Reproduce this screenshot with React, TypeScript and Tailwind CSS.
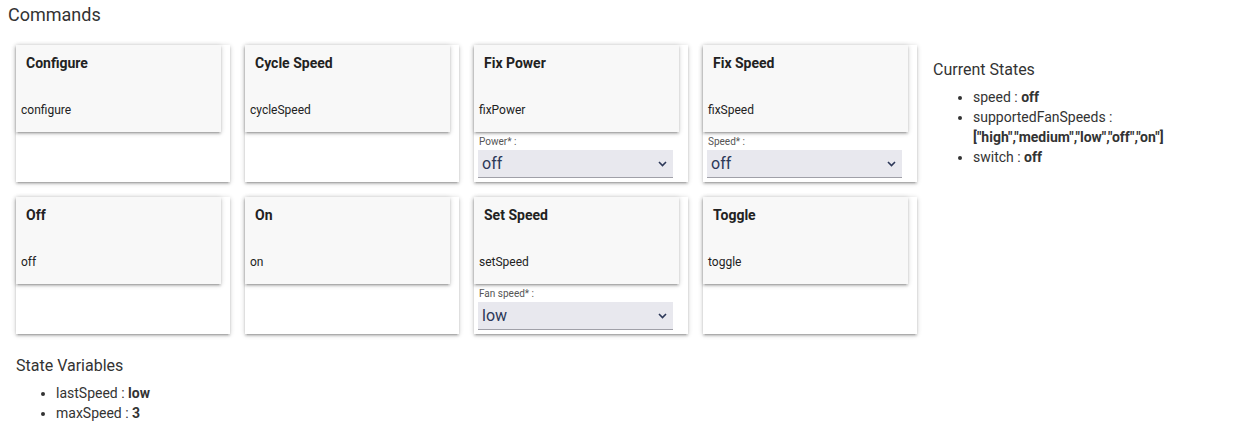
import { ChangeEvent, useState } from "react";

interface CommandProps {
  title: string;
  method: string;
  param?: { label: string; value: string; options: string[] };
}

const cardShadow =
  "shadow-[0_2px_2px_0_rgba(0,0,0,0.14),0_3px_1px_-2px_rgba(0,0,0,0.12),0_1px_5px_0_rgba(0,0,0,0.2)]";

const CommandCard = ({ title, method, param }: CommandProps) => {
  const [value, setValue] = useState(param?.value ?? "");

  return (
    <div className={`w-[214px] h-[137px] bg-white ${cardShadow}`}>
      <div className={`w-[205px] h-[87px] bg-[#f8f8f8] ${cardShadow}`}>
        <div className="pl-[10px] pt-[8px] text-[14px] leading-[20px] font-bold text-[#222]">{title}</div>
        <div className="pl-[5px] mt-[29px] text-[12px] leading-[16px] text-[#222]">{method}</div>
      </div>
      {param && (
        <div className="pl-[4px] pt-[4px]">
          <div className="pl-[1px] text-[10px] leading-[12px] text-[#555]">{param.label}</div>
          <div className="relative mt-[2px] w-[195px]">
            <select
              value={value}
              onChange={(e: ChangeEvent<HTMLSelectElement>) => setValue(e.target.value)}
              className="appearance-none w-full h-[28px] pl-[4px] bg-[#e8e8ee] border-b border-[#a0a0a8] text-[16px] text-[#2c3858] outline-none"
            >
              {param.options.map((o) => (
                <option key={o} value={o}>
                  {o}
                </option>
              ))}
            </select>
            <svg
              className="pointer-events-none absolute right-[6px] top-[11px]"
              width="9"
              height="6"
              viewBox="0 0 9 6"
              fill="none"
              stroke="#2c3858"
              strokeWidth="1.6"
            >
              <path d="M1 1l3.5 3.5L8 1" />
            </svg>
          </div>
        </div>
      )}
    </div>
  );
};

const speeds = ["low", "medium-low", "medium", "medium-high", "high", "on", "off", "auto"];

const App = () => {
  const commands: CommandProps[] = [
    { title: "Configure", method: "configure" },
    { title: "Cycle Speed", method: "cycleSpeed" },
    { title: "Fix Power", method: "fixPower", param: { label: "Power* :", value: "off", options: ["on", "off"] } },
    { title: "Fix Speed", method: "fixSpeed", param: { label: "Speed* :", value: "off", options: speeds } },
    { title: "Off", method: "off" },
    { title: "On", method: "on" },
    { title: "Set Speed", method: "setSpeed", param: { label: "Fan speed* :", value: "low", options: speeds } },
    { title: "Toggle", method: "toggle" },
  ];

  return (
    <div className="w-[1242px] h-[440px] bg-white pl-2 text-[#333] font-['Roboto','Liberation_Sans',sans-serif]">
      <h2 className="pt-[4px] text-[18px] leading-[22px] font-normal">Commands</h2>
      <div className="flex mt-[19px] ml-2">
        <div className="grid grid-cols-[repeat(4,214px)] gap-[15px]">
          {commands.map((c) => (
            <CommandCard key={c.method} {...c} />
          ))}
        </div>
        <div className="ml-[16px] pt-[15px]">
          <div className="text-[16px] leading-[20px]">Current States</div>
          <ul className="mt-[7px] pl-[40px] list-disc text-[14px] leading-[20px] marker:text-[13px]">
            <li>
              speed : <b>off</b>
            </li>
            <li className="w-[230px]">
              supportedFanSpeeds : <b>["high","medium","low","off","on"]</b>
            </li>
            <li>
              switch : <b>off</b>
            </li>
          </ul>
        </div>
      </div>
      <div className="ml-2 mt-[22px]">
        <div className="text-[16px] leading-[20px]">State Variables</div>
        <ul className="mt-[7px] pl-[40px] list-disc text-[14px] leading-[20px] marker:text-[13px]">
          <li>
            lastSpeed : <b>low</b>
          </li>
          <li>
            maxSpeed : <b>3</b>
          </li>
        </ul>
      </div>
    </div>
  );
};

export default App;
